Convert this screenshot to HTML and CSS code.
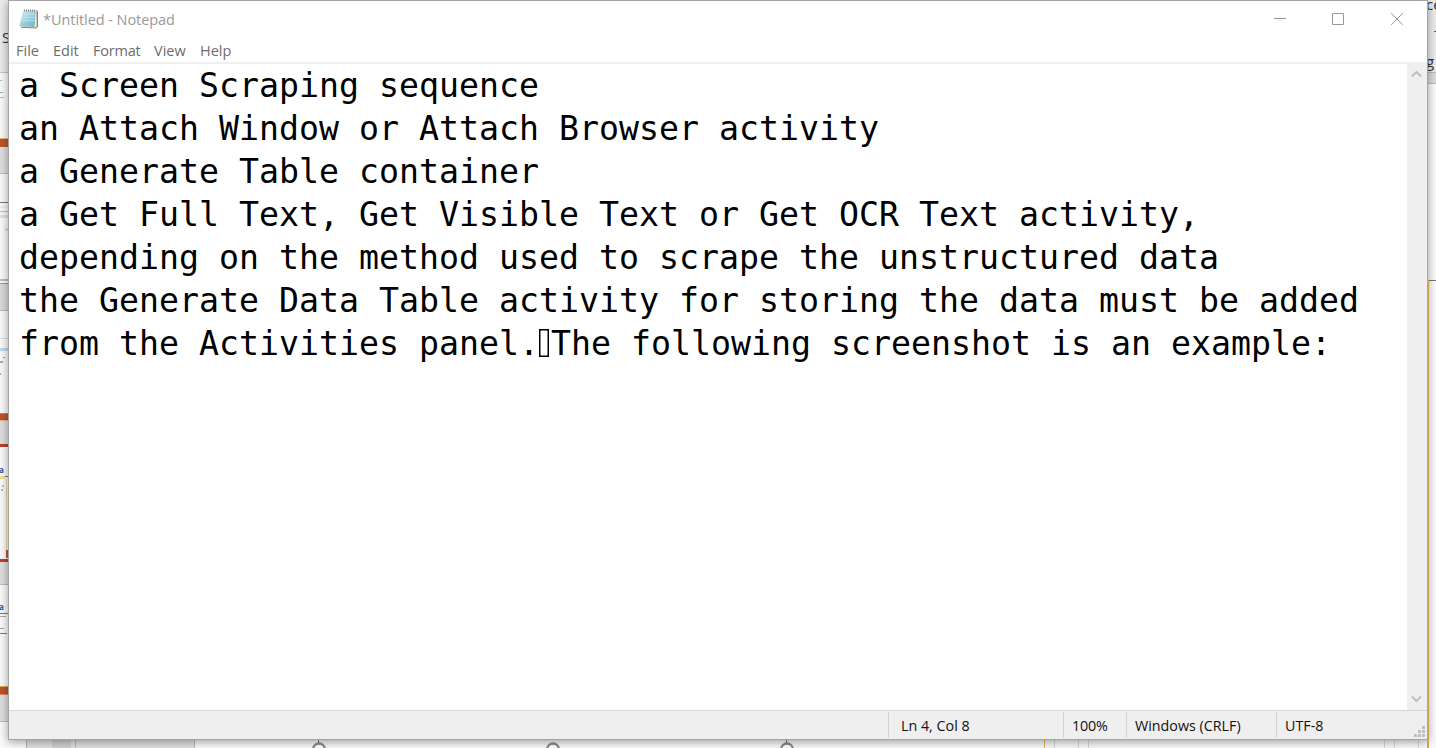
FILE: index.html
```html
<!DOCTYPE html>
<html lang="en">
<head>
<meta charset="utf-8">
<title>Untitled - Notepad</title>
<link rel="stylesheet" href="styles.css">
</head>
<body>
<svg class="desktop" width="1436" height="748" viewBox="0 0 1436 748" shape-rendering="crispEdges" aria-hidden="true">
  <rect width="1436" height="748" fill="#fafafa"/>
  <!-- slide thumbnails at the left edge -->
  <rect width="9" height="72" fill="#ebebeb"/>
  <rect y="72" width="9" height="1" fill="#c3c3c3"/>
  <rect y="80" width="2" height="1" fill="#a3c3d3"/><rect y="92" width="3" height="1" fill="#8eb0c4"/><rect y="97" width="4" height="1" fill="#bbb"/>
  <rect y="138" width="9" height="1" fill="#e7b96e"/><rect y="139" width="9" height="8" fill="#c0562a"/>
  <rect y="147" width="9" height="26" fill="#dedede"/><rect y="173" width="9" height="1" fill="#bbb"/>
  <rect y="202" width="9" height="1" fill="#777"/>
  <rect y="206" width="9" height="2" fill="#eee"/><rect y="211" width="9" height="1" fill="#c9b9b1"/><rect y="215" width="9" height="3" fill="#e2e2e2"/>
  <rect x="5" y="228" width="4" height="3" fill="#ddd"/>
  <rect y="279" width="9" height="2" fill="#cbb9b4"/><rect y="283" width="9" height="1" fill="#b98b7c"/>
  <rect y="284" width="9" height="26" fill="#dadada"/><rect y="310" width="9" height="1" fill="#bbb"/>
  <rect y="338" width="9" height="1" fill="#ddd"/><rect y="348" width="8" height="3" fill="#b9dcf0"/>
  <rect x="3" y="357" width="2" height="1" fill="#999"/><rect y="361" width="3" height="2" fill="#aaa"/><rect y="373" width="1" height="2" fill="#aaa"/>
  <rect y="413" width="9" height="1" fill="#d97b42"/><rect y="414" width="9" height="6" fill="#bd5429"/><rect y="420" width="9" height="1" fill="#e7b096"/>
  <rect y="421" width="9" height="23" fill="#dedede"/><rect y="444" width="9" height="3" fill="#b94027"/>
  <rect y="476" width="5" height="3" fill="#f5df9e"/><rect x="5" y="476" width="4" height="1" fill="#777"/>
  <rect x="6" y="479" width="1" height="79" fill="#e6dca9"/><rect x="2" y="485" width="2" height="2" fill="#bbc"/><rect x="1" y="489" width="2" height="2" fill="#bbb"/>
  <rect x="6" y="550" width="3" height="8" fill="#c0562a"/>
  <rect y="559" width="9" height="3" fill="#b94027"/><rect y="562" width="9" height="22" fill="#dedede"/><rect y="584" width="9" height="1" fill="#bbb"/>
  <rect y="613" width="9" height="1" fill="#777"/><rect y="616" width="6" height="1" fill="#aaa"/><rect y="628" width="4" height="1" fill="#9aa6b6"/><rect y="633" width="7" height="1" fill="#71839a"/>
  <rect y="686" width="9" height="1" fill="#e5a958"/><rect y="687" width="9" height="7" fill="#bd5429"/><rect y="694" width="9" height="1" fill="#e0886a"/>
  <rect y="695" width="9" height="26" fill="#dedede"/><rect y="721" width="9" height="1" fill="#bbb"/>
  <text class="sliver" x="2" y="43" font-size="15">S</text>
  <text class="label" x="-1" y="473" font-size="8">a</text>
  <text class="label" x="-1" y="610" font-size="8">a</text>
  <!-- ribbon at the right edge -->
  <rect x="1427" width="9" height="72" fill="#ececec"/>
  <rect x="1427" y="72" width="9" height="12" fill="#dadada"/><rect x="1427" y="72" width="9" height="1" fill="#bbb"/><rect x="1427" y="83" width="9" height="1" fill="#bbb"/>
  <text class="sliver" x="1426" y="10" font-size="15">ce</text>
  <text class="sliver" x="1426" y="67" font-size="15">g</text>
  <rect x="1427" y="31" width="1" height="1" fill="#555"/><rect x="1427" y="38" width="1" height="1" fill="#555"/><rect x="1434" y="31" width="2" height="1" fill="#555"/>
  <rect x="1429" y="280" width="7" height="1" fill="#777"/>
  <!-- slide canvas below the window -->
  <rect x="26" y="738" width="169" height="10" fill="#e2e2e2"/>
  <rect x="26" y="738" width="1" height="10" fill="#bbb"/><rect x="52" y="738" width="19" height="10" fill="#d2d2d2"/><rect x="75" y="738" width="1" height="10" fill="#bbb"/><rect x="194" y="738" width="1" height="10" fill="#bbb"/>
  <path d="M318.5 739v4M786.5 739v4" stroke="#777"/>
  <g fill="#fff" stroke="#8c8c8c" stroke-width="2.300" shape-rendering="auto"><circle cx="319" cy="749.500" r="6"/><circle cx="553" cy="749.500" r="6"/><circle cx="787" cy="749.500" r="6"/></g>
  <rect x="1044" y="738" width="1" height="10" fill="#e2bd55"/>
  <path d="M1054.500 739v9M1078.500 739v9M1088.500 739v9M1384.500 739v9M1394.500 739v9M1418.500 739v9" stroke="#d5dae3"/>
</svg>

<main class="window">
  <header class="titlebar">
    <svg class="app-icon" width="20" height="22" viewBox="0 0 20 22">
      <defs><linearGradient id="paper" x1="0" y1="0" x2="1" y2="1"><stop offset="0" stop-color="#d6f0f5"/><stop offset="1" stop-color="#65b4c9"/></linearGradient></defs>
      <path d="M16 2l3 1v15.500l-2 2-15-.8v-1z" fill="#9c7f56"/>
      <path d="M4.500 2.500l13-.2.300 16.200-1.500 1-14.500-1z" fill="#f0ead9"/>
      <path d="M4.300 2.500h12.500L15.500 19 .200 18.300z" fill="url(#paper)"/>
      <path d="M4.500 6.500h11M4 9.500h11.500M3.300 12.500h12" stroke="#c5e8ef" stroke-width=".7"/>
      <path d="M5.500 1.500v2M7.500 1.500v2M9.500 1.500v2M11.500 1.500v2M13.500 1.500v2M15.500 1.500v2" stroke="#888" stroke-width="1"/>
    </svg>
    <h1 class="title">*Untitled - Notepad</h1>
    <svg class="controls" width="136" height="20" viewBox="0 0 136 20" fill="none" stroke="#999">
      <path d="M2 9.500h12M60.500 4.500h11v11h-11z"/><path d="M119.200 4.200l11.600 11.600M130.800 4.200l-11.600 11.600"/>
    </svg>
  </header>
  <nav class="menu">
    <span class="file">File</span><span class="edit">Edit</span><span class="format">Format</span><span class="view">View</span><span class="help">Help</span>
  </nav>
  <section class="editor">
    <div class="text">
      <div>a Screen Scraping sequence</div>
      <div>an Attach Window or Attach Browser activity</div>
      <div>a Generate Table container</div>
      <div>a Get Full Text, Get Visible Text or Get OCR Text activity,</div>
      <div>depending on the method used to scrape the unstructured data</div>
      <div>the Generate Data Table activity for storing the data must be added</div>
      <div>from the Activities panel.<span class="unknown-char"></span>The following screenshot is an example:</div>
    </div>
    <div class="scrollbar">
      <svg width="11" height="8" viewBox="0 0 11 8"><path d="M1 6.500l4.500-4.500L10 6.500" fill="none" stroke="#bfbfbf" stroke-width="2"/></svg>
      <svg width="11" height="8" viewBox="0 0 11 8"><path d="M1 1.500L5.500 6 10 1.500" fill="none" stroke="#bfbfbf" stroke-width="2"/></svg>
    </div>
  </section>
  <footer class="status">
    <span class="cell position">Ln 4, Col 8</span>
    <span class="cell zoom">100%</span>
    <span class="cell endings">Windows (CRLF)</span>
    <span class="cell encoding">UTF-8</span>
    <svg class="grip" width="11" height="11" viewBox="0 0 11 11" fill="#bfbfbf"><path d="M8 0h3v3H8zM4 4h3v3H4zM8 4h3v3H8zM0 8h3v3H0zM4 8h3v3H4zM8 8h3v3H8z"/></svg>
  </footer>
</main>
<svg class="guide" width="2" height="468" viewBox="0 0 2 468"><path d="M0 0h2v468H0z" fill="#c9a653"/></svg>
</body>
</html>
```
FILE: styles.css
```css
* { box-sizing: border-box; }
body {
  margin: 0;
  width: 1436px;
  height: 748px;
  overflow: hidden;
  position: relative;
  padding-left: 8px;
  font-family: "Open Sans", "Noto Sans", sans-serif;
}
.desktop { position: absolute; left: 0; top: 0; }
.sliver { font-family: "Open Sans", sans-serif; fill: #333; }
.label { font-family: "Open Sans", sans-serif; font-weight: 700; fill: #1f5b92; }
.window {
  position: relative;
  display: flex;
  flex-direction: column;
  width: 1420px;
  height: 740px;
  border: 1px solid #a4a4a4;
  background: #fff;
  box-shadow: 0 2px 9px rgba(0, 0, 0, .38);
}
.titlebar {
  display: flex;
  flex: none;
  height: 37px;
  padding: 7px 19px 0 10px;
}
.app-icon { flex: none; }
.title {
  margin: 0 0 0 4px;
  font-size: 14.5px;
  font-weight: 400;
  line-height: 24px;
  letter-spacing: -.06px;
  color: #999;
  white-space: nowrap;
}
.controls { margin: 1px 0 0 auto; }
.menu {
  display: flex;
  flex: none;
  height: 24px;
  padding-left: 7px;
  font-size: 14.5px;
  line-height: 25px;
  color: #6d6d6d;
}
.file { width: 37px; }
.edit { width: 40px; }
.format { width: 61px; letter-spacing: -.2px; }
.view { width: 46px; }
.editor {
  display: flex;
  flex: 1;
  border-top: 2px solid #efefef;
}
.text {
  flex: 1;
  padding-left: 10px;
  font: 33.220px/43px "DejaVu Sans Mono", monospace;
  color: #000;
}
.text div { height: 43px; white-space: pre; }
.unknown-char {
  display: inline-block;
  width: 10px;
  height: 28px;
  margin: 0 2px 0 0;
  border: 1px solid #000;
  box-shadow: inset 0 0 0 .5px #000;
  vertical-align: -2px;
}
.scrollbar {
  display: flex;
  flex-direction: column;
  align-items: center;
  justify-content: space-between;
  width: 20px;
  padding: 6px 1px 7px 0;
  background: #efefef;
}
.status {
  display: flex;
  flex: none;
  position: relative;
  height: 29px;
  padding: 1px 0 1px 879px;
  border-top: 1px solid #d6d6d6;
  background: #efefef;
  font-size: 14.3px;
  line-height: 27px;
  color: #111;
}
.cell { border-left: 1px solid #d3d3d3; white-space: nowrap; letter-spacing: 0; }
.position { width: 175px; padding-left: 12px; }
.zoom { width: 63px; padding-left: 8px; letter-spacing: -.2px; }
.endings { width: 150px; padding-left: 8px; }
.encoding { padding-left: 8px; }
.grip { position: absolute; right: 2px; bottom: 2px; }
.guide { position: absolute; left: 1427px; top: 280px; }
```
